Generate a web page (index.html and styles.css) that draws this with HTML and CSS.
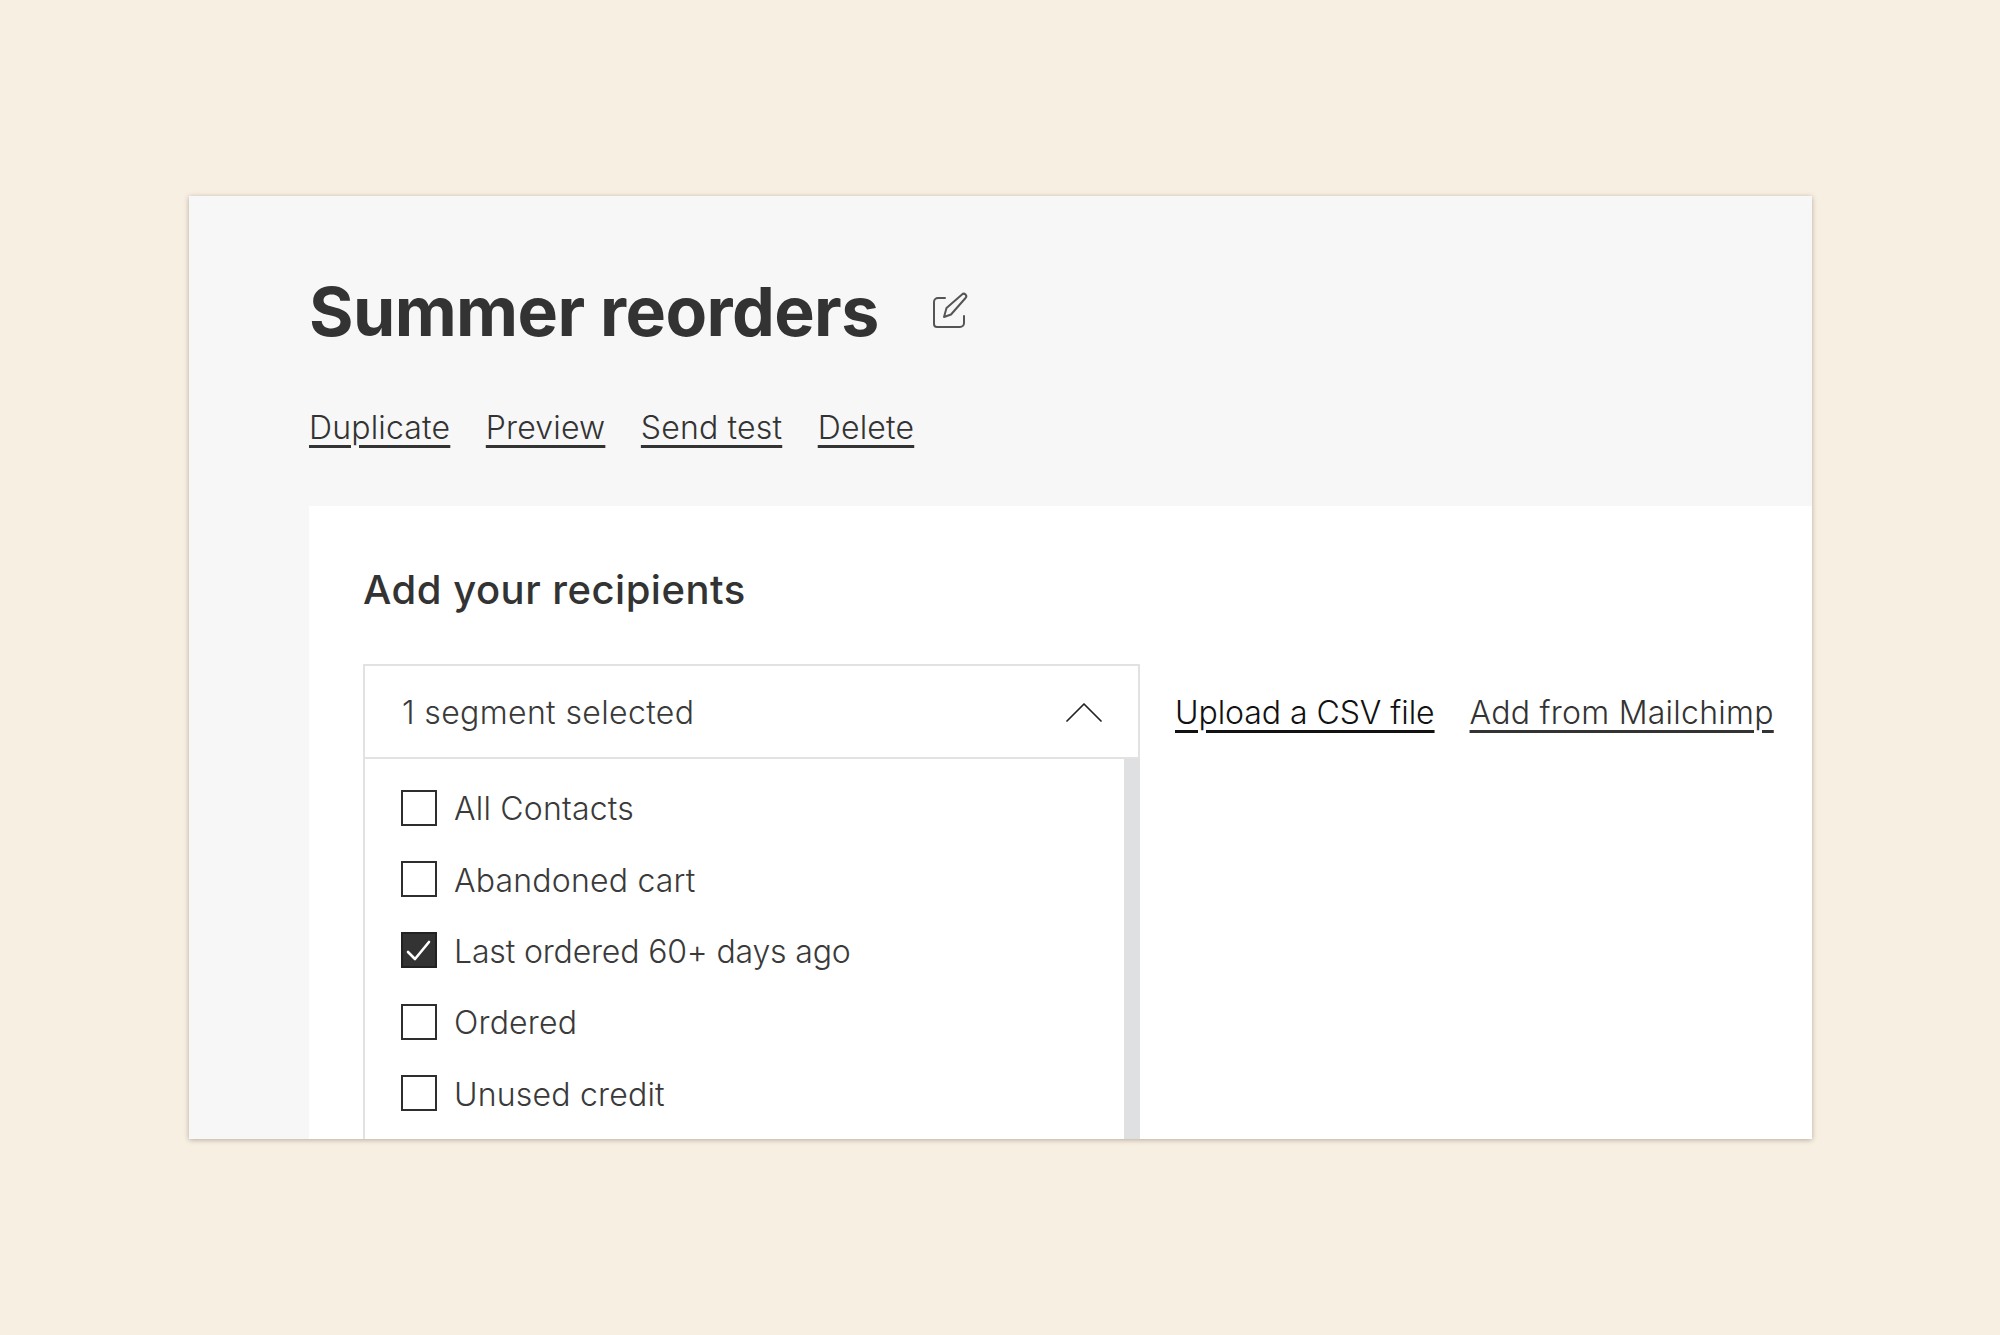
FILE: index.html
```html
<!DOCTYPE html>
<html lang="en">
<head>
<meta charset="utf-8">
<title>Summer reorders</title>
<link rel="stylesheet" href="styles.css">
</head>
<body>
<main class="card">
  <header class="head">
    <div class="title-row">
      <h1 class="title">Summer reorders</h1>
      <svg class="edit" width="60" height="60" viewBox="0 0 60 60" fill="none" stroke="#555" stroke-width="2" stroke-linecap="round" stroke-linejoin="round"><path d="M25 17H18a4 4 0 0 0-4 4V43a3 3 0 0 0 3 3H40a4 4 0 0 0 4-4V35"/><path d="M24 36l2.500-9L42 13.500a2.500 2.500 0 0 1 3.500 0a2.500 2.500 0 0 1 0 3.500L31 33.500Z"/></svg>
    </div>
    <nav class="actions">
      <a class="link nav" href="#">Duplicate</a>
      <a class="link nav" href="#">Preview</a>
      <a class="link nav" href="#">Send test</a>
      <a class="link nav" href="#">Delete</a>
    </nav>
  </header>
  <section class="panel">
    <h2 class="panel-title">Add your recipients</h2>
    <div class="picker">
      <div class="select">
        <div class="select-head">
          <span class="wide">1 segment selected</span>
          <svg class="chev" width="36" height="19" viewBox="0 0 36 19" fill="none" stroke="#222" stroke-width="1.700" stroke-linecap="round" stroke-linejoin="round"><path d="M1 18L18 1L35 18"/></svg>
        </div>
        <ul class="list">
          <li class="item"><span class="box"></span>All Contacts</li>
          <li class="item"><span class="box"></span>Abandoned cart</li>
          <li class="item tight"><span class="box on"><svg width="36" height="36" viewBox="0 0 36 36" fill="none" stroke="#fff" stroke-width="2.600" stroke-linecap="round" stroke-linejoin="round"><path d="M7 20l7 7L28 10"/></svg></span>Last ordered 60+ days ago</li>
          <li class="item"><span class="box"></span>Ordered</li>
          <li class="item"><span class="box"></span>Unused credit</li>
        </ul>
      </div>
      <a class="link dark" href="#">Upload a CSV file</a>
      <a class="link wide" href="#">Add from Mailchimp</a>
    </div>
  </section>
</main>
</body>
</html>
```
FILE: styles.css
```css
* { box-sizing: border-box; }
html, body { margin: 0; height: 100%; }
body {
  background: #f7efe2;
  padding: 196px 189px 0;
  font-family: Inter, "Liberation Sans", sans-serif;
  color: #3a3a3a;
  overflow: hidden;
}
.card {
  width: 1623px;
  height: 943px;
  background: #f7f7f7;
  overflow: hidden;
  box-shadow: 0 1px 5px rgba(60, 50, 30, .35);
  display: flex;
  flex-direction: column;
}
.head { padding: 55px 0 0 120px; height: 310px; }
.title-row { display: flex; align-items: center; height: 120px; gap: 41px; }
.title { margin: 0; font-size: 68px; font-weight: 700; line-height: 80px; color: #333; letter-spacing: -.6px; }
.actions { display: flex; gap: 35.500px; margin-top: 37px; }
.link {
  font-size: 32px;
  line-height: 40px;
  font-weight: 300;
  color: #333;
  text-decoration: underline;
  text-decoration-thickness: 2.500px;
  text-underline-offset: 6px;
  white-space: nowrap;
}
.nav { letter-spacing: .18px; }
.wide { letter-spacing: .26px; }
.dark { color: #111; letter-spacing: -.06px; }
.panel { flex: 1; margin-left: 120px; background: #fff; padding: 59px 0 0 54px; min-height: 0; }
.panel-title { margin: 0; font-size: 40px; line-height: 50px; font-weight: 500; color: #333; letter-spacing: .5px; }
.picker { display: flex; align-items: flex-start; gap: 35px; margin-top: 49px; }
.picker .link { margin-top: 29px; }
.select { width: 777px; flex: none; }
.select-head {
  display: flex; align-items: center; justify-content: space-between;
  height: 95px;
  padding: 1px 36px 0 37px;
  border: 2.500px solid #e2e2e2;
  font-size: 32px;
  font-weight: 300;
}
.select-head .wide { letter-spacing: .36px; }
.list {
  list-style: none;
  margin: 0;
  padding: 14px 0 0 36px;
  border-left: 2.500px solid #e2e2e2;
  border-right: 16px solid #dfe0e2;
  height: 400px;
}
.item { display: flex; align-items: center; height: 71.400px; font-size: 32px; font-weight: 300; gap: 17px; letter-spacing: .2px; }
.tight { letter-spacing: -.16px; }
.box { width: 36px; height: 36px; flex: none; margin-bottom: 2px; border: 2.500px solid #2e2e2e; background: #fff; }
.box.on { background: #333; border-color: #222; display: flex; align-items: center; justify-content: center; }
.box.on svg { flex: none; }
```
